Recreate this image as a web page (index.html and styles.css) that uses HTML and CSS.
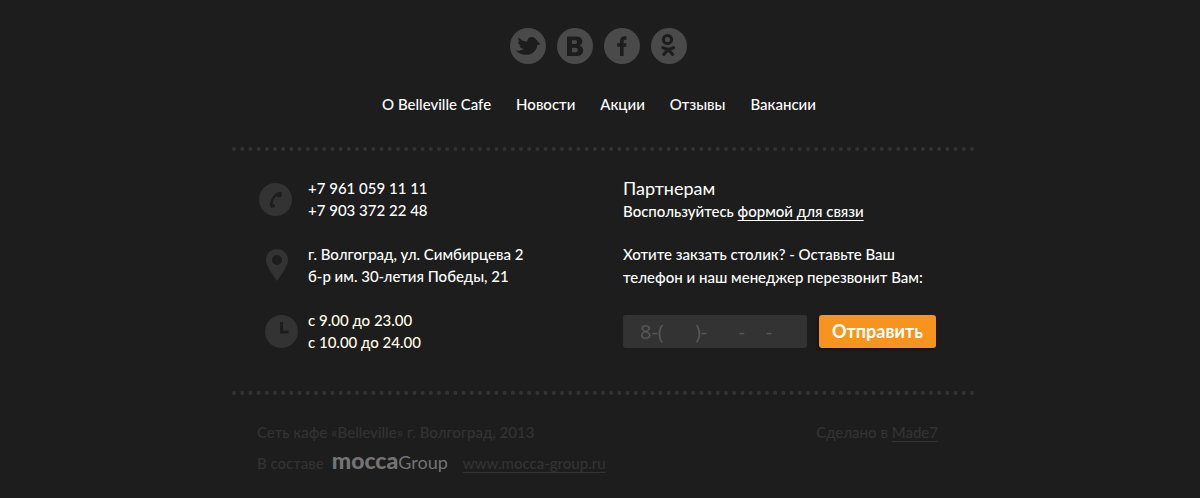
FILE: index.html
```html
<!DOCTYPE html>
<html lang="ru">
<head>
<meta charset="utf-8">
<meta name="viewport" content="width=device-width, initial-scale=1">
<title>Belleville Cafe</title>
<link rel="stylesheet" href="styles.css">
</head>
<body>
<footer class="footer">
  <div class="social">
    <a href="#" aria-label="Twitter"><svg viewBox="0 0 36 36"><circle class="disc" cx="18" cy="18" r="18"/><path class="mark" d="M5.500 22.500c3 .6 6 .1 8.200-1.500-2.200-.3-3.700-1.200-4.300-2.900h2c-2-.9-3.300-2.500-3.500-4.600l2 .5c-1.500-1.200-2-2.900-1.400-4.800 2.200 2.600 5 4.300 8.500 4.600.4-2.800 2.200-4.800 4.700-4.800 1.700 0 2.900.6 3.800 1.900 1.200.8 2.400 3 4.800 5-1 .7-2 1.100-3.100 1.300-.6 5.500-4.700 9.600-10.700 9.600-4.400 0-8.400-1.500-11-4.300z"/></svg></a>
    <a href="#" aria-label="ВКонтакте"><svg viewBox="0 0 36 36"><circle class="disc" cx="18" cy="18" r="18"/><path class="mark" fill-rule="evenodd" d="M10 8.500h9c4 0 6.300 1.800 6.300 4.900 0 2-1 3.400-2.900 4.100 2.400.6 3.800 2.200 3.800 4.700 0 3.700-2.500 5.800-6.900 5.800H10zM15 12.200v3.900h2.800c1.500 0 2.300-.7 2.300-2s-.8-1.900-2.300-1.900zM15 19.700v4.500h3.200c1.700 0 2.600-.8 2.600-2.300s-.9-2.200-2.600-2.200z"/></svg></a>
    <a href="#" aria-label="Facebook"><svg viewBox="0 0 36 36"><circle class="disc" cx="18" cy="18" r="18"/><path class="mark" d="M16 28V18.800h-2.800v-3.500H16v-2.100c0-3.300 1.700-4.900 4.900-4.900h1.600v3.400h-1.300c-1.100 0-1.600.5-1.600 1.600v2h2.900l-.4 3.500h-2.500V28z"/></svg></a>
    <a href="#" aria-label="Одноклассники"><svg viewBox="0 0 36 36"><circle class="disc" cx="18" cy="18" r="18"/><circle class="pen" cx="16.500" cy="11.500" r="4.100"/><path class="pen" d="M11.800 19.600c3.300 2 7.500 2 10.800 0M17.200 21.500l-4.500 5M17.200 21.500l4.500 5"/></svg></a>
  </div>

  <nav class="menu">
    <a href="#">О Belleville Cafe</a>
    <a href="#">Новости</a>
    <a href="#">Акции</a>
    <a href="#">Отзывы</a>
    <a href="#">Вакансии</a>
  </nav>

  <div class="wrap">
    <svg class="dots" viewBox="0 0 744 4" aria-hidden="true"><path d="M3 2H743"/></svg>

    <div class="info">
      <div class="contacts">
        <div class="contact">
          <svg class="icon-phone" viewBox="0 0 33 33" aria-hidden="true"><circle class="dim" cx="16.500" cy="16.500" r="16.500"/><path class="cut" d="M22.800 9.300c-2.300-.7-4.400-.2-6.300 1.500-2.700 2.300-4.800 6-5.600 9.600-.4 1.900.2 3.400 1.700 4.500l2.700-.6c.8-.2 1-1.200.6-2l-1-1.600-1.500.3c.3-3 1.900-6.200 4.300-8l1.200 1.500 2.600-.5c.7-.2 1-.7 1.100-1.300z"/></svg>
          <p>+7 961 059 11 11<br>+7 903 372 22 48</p>
        </div>
        <div class="contact">
          <svg class="icon-pin" viewBox="0 0 22 32" aria-hidden="true"><path class="dim" fill-rule="evenodd" d="M11 0C4.900 0 0 4.900 0 11c0 5.500 6.500 14.500 11 21 4.500-6.500 11-15.500 11-21C22 4.900 17.100 0 11 0zm0 6a5 5 0 1 1 0 10 5 5 0 0 1 0-10z"/></svg>
          <p>г. Волгоград, ул. Симбирцева 2<br>б-р им. 30-летия Победы, 21</p>
        </div>
        <div class="contact hours">
          <svg class="icon-clock" viewBox="0 0 33 33" aria-hidden="true"><circle class="dim" cx="16.500" cy="16.500" r="16.500"/><path class="hands" d="M16.500 7v10h7"/></svg>
          <p>с 9.00 до 23.00<br>с 10.00 до 24.00</p>
        </div>
      </div>

      <div class="partners">
        <h2>Партнерам</h2>
        <p>Воспользуйтесь <a href="#">формой для связи</a></p>
        <form class="callback">
          <label for="phone">Хотите закзать столик? - Оставьте Ваш<br>телефон и наш менеджер перезвонит Вам:</label>
          <div class="row">
            <input id="phone" type="tel" placeholder="8-(      )-      -    -">
            <button type="button">Отправить</button>
          </div>
        </form>
      </div>
    </div>

    <svg class="dots" viewBox="0 0 744 4" aria-hidden="true"><path d="M3 2H743"/></svg>

    <div class="legal">
      <p>Сеть кафе «Belleville» г. Волгоград, 2013</p>
      <p>Сделано в <a href="#">Made7</a></p>
    </div>
    <div class="group">
      <span>В составе</span>
      <span class="logo"><b>mocca</b>Group</span>
      <a href="#">www.mocca-group.ru</a>
    </div>
  </div>
</footer>
</body>
</html>
```
FILE: styles.css
```css
* { box-sizing: border-box; }
body {
  margin: 0;
  background: #1d1d1d;
  color: #fff;
  font: 500 15px/22px "Trebuchet MS", Lato, "Open Sans", sans-serif;
}
p, h2 { margin: 0; }
a { color: inherit; }
svg { display: block; }

.footer { padding: 28px 0 24px; }

.social {
  display: flex;
  justify-content: center;
  gap: 11px;
  padding-right: 3px;
}
.social svg { width: 36px; height: 36px; }
.disc { fill: #4a4a4a; }
.mark { fill: #1d1d1d; }
.pen { fill: none; stroke: #1d1d1d; stroke-width: 3; stroke-linecap: round; }

.menu {
  display: flex;
  flex-wrap: wrap;
  justify-content: center;
  gap: 25px;
  margin-top: 29px;
  padding-right: 2px;
}
.menu a { text-decoration: none; }

.wrap {
  max-width: 750px;
  margin: 32px auto 0;
  padding-left: 6px;
}
.dots { width: 100%; height: auto; }
.dots path {
  fill: none;
  stroke: #333;
  stroke-width: 4;
  stroke-linecap: round;
  stroke-dasharray: 0 8.200;
}

.info {
  display: grid;
  grid-template-columns: 366px 1fr;
  padding: 26px 0 38px 26px;
}
.contacts { display: grid; gap: 22px; align-content: start; }
.contact {
  display: grid;
  grid-template-columns: 42px 1fr;
  column-gap: 9px;
  align-items: center;
}
.contact svg { justify-self: center; }
.hours { color: #fffce6; }
.dim { fill: #333; }
.cut { fill: #1d1d1d; }
.hands { fill: none; stroke: #1d1d1d; stroke-width: 3; }
.icon-phone { width: 33px; margin-right: 6px; }
.icon-pin { width: 22px; margin-right: 2px; }
.icon-clock { width: 33px; margin-left: 6px; }

.partners h2 { font-size: 18px; line-height: 22px; font-weight: 400; }
.partners p { line-height: 24px; }
.callback { margin-top: 20px; }
.callback label { display: block; line-height: 23px; }
.row { display: flex; gap: 12px; margin-top: 26px; }
.row input {
  width: 184px;
  height: 33px;
  padding: 0 17px;
  border: 0;
  border-radius: 3px;
  background: #333;
  color: #fff;
  font: 20px "Trebuchet MS", "Open Sans", sans-serif;
}
.row input::placeholder { color: #585858; opacity: 1; }
.row button {
  width: 117px;
  height: 33px;
  padding: 0 0 2px;
  border: 0;
  border-radius: 3px;
  background: #f7941d;
  box-shadow: -2px 2px 2px #161616;
  color: #fff;
  font: bold 18px "Trebuchet MS", Lato, "Open Sans", sans-serif;
}

.legal, .group { color: #333; padding: 0 37px 0 26px; display: flex; }
.legal { justify-content: space-between; margin-top: 26px; }
.group { margin-top: 6px; align-items: baseline; }
.legal a, .group a, .partners a { text-underline-offset: 3px; }
.logo {
  margin: 0 15px 0 8px;
  color: #747474;
  font-family: Lato, sans-serif;
  font-size: 18px;
  font-weight: 400;
}
.logo b { font-size: 23px; font-weight: 900; }
```
